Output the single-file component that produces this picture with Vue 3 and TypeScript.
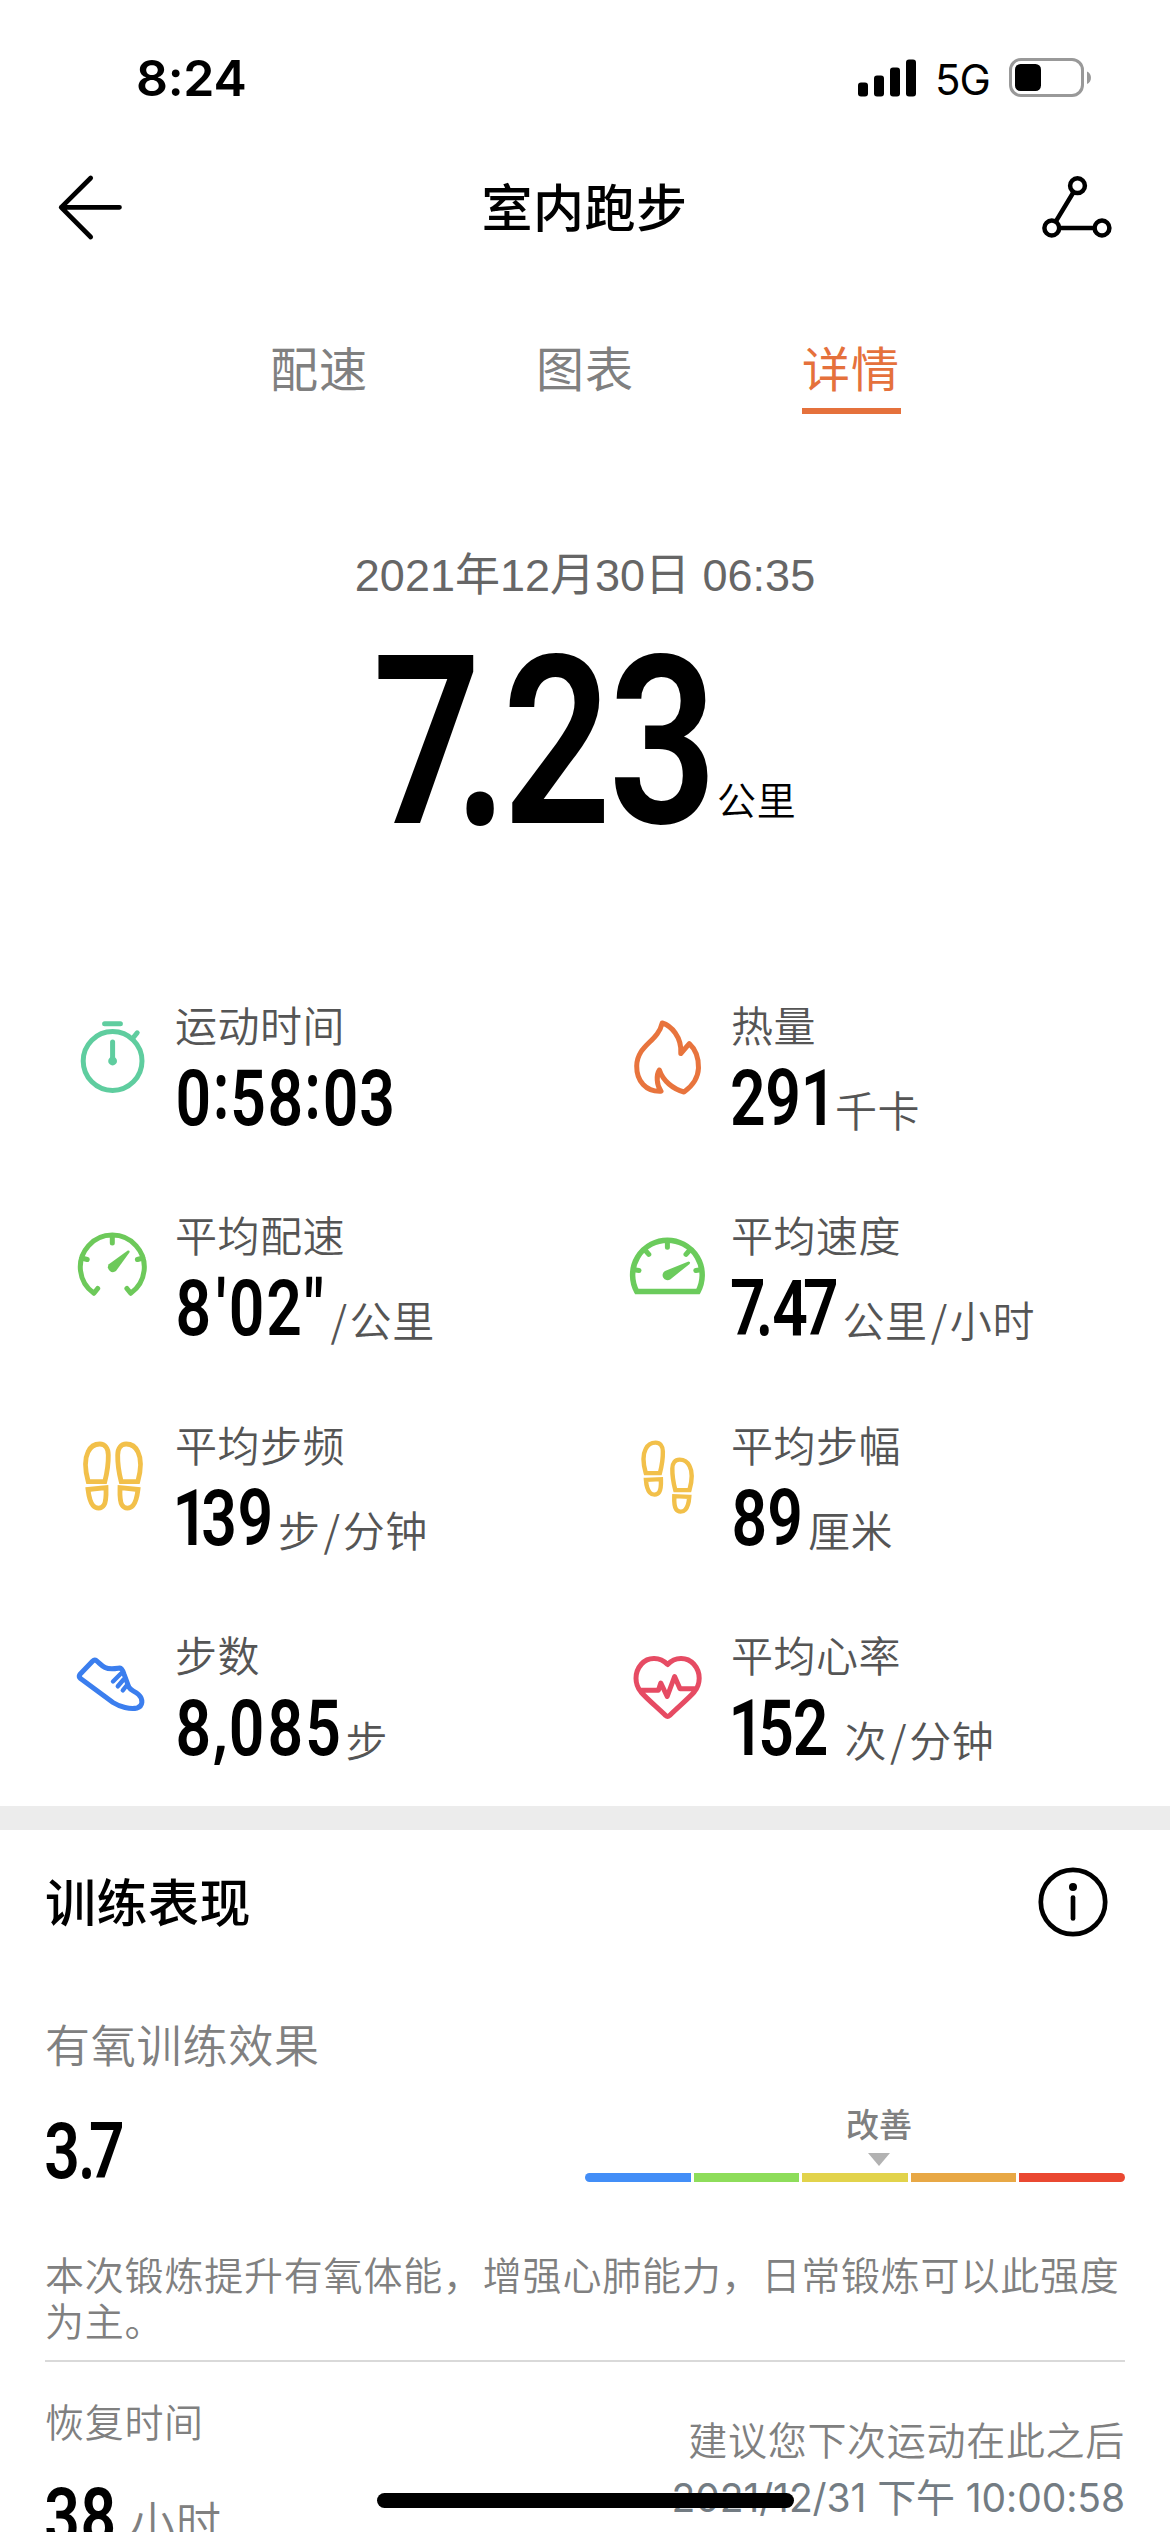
<script setup lang="ts">
import { defineComponent, h } from 'vue'

interface Glyph {
  ch: string
  x: number
}

interface Metric {
  icon: string
  color: string
  label: string
  glyphs: Glyph[]
  width: number
  unit: string[]
}

const glyphs = (text: string, centers: number[]): Glyph[] =>
  text.split('').map((ch, i) => ({ ch, x: centers[i] }))

// Condensed numerals: each glyph is centred on its own x, the baseline is the bottom edge.
const Numeral = defineComponent({
  props: {
    items: { type: Array as () => Glyph[], required: true },
    width: { type: Number, required: true },
    size: { type: Number, required: true },
  },
  setup(props) {
    const squeeze = 0.81
    return () => {
      const height = Math.round(props.size * 0.8)
      return h(
        'svg',
        {
          width: props.width,
          height,
          viewBox: `0 0 ${props.width} ${height}`,
          style: { display: 'block', overflow: 'visible', flex: 'none' },
        },
        h(
          'text',
          {
            transform: `scale(${squeeze} 1)`,
            'text-anchor': 'middle',
            'font-family': 'Roboto, sans-serif',
            'font-weight': 600,
            'font-size': props.size,
            fill: '#000',
          },
          props.items.map((g) =>
            h(
              'tspan',
              {
                x: (g.x + (g.ch === '1' ? props.size * 0.055 : 0)) / squeeze,
                // the colon sits centred between baseline and cap height
                y: height - (g.ch === ':' ? props.size * 0.085 : 0),
                // Roboto's own dots are square
                'font-family': /[.,:]/.test(g.ch) ? '"Open Sans", sans-serif' : undefined,
              },
              g.ch,
            ),
          ),
        ),
      )
    }
  },
})

const tabs = ['配速', '图表', '详情']
const activeTab = '详情'

const distance = glyphs('7.23', [46.8, 100, 177, 283])
const effect = glyphs('3.7', [17, 41.6, 61.9])
const recovery = glyphs('38', [17, 53.2])

const metrics: Metric[] = [
  { icon: 'timer', color: '#5fcd9f', label: '运动时间', glyphs: glyphs('0:58:03', [18.3, 46.1, 73, 110.4, 137.5, 165.7, 202.2]), width: 222, unit: [] },
  { icon: 'flame', color: '#e8743d', label: '热量', glyphs: glyphs('291', [16.7, 52.1, 83.4]), width: 104, unit: ['千卡'] },
  { icon: 'pace', color: '#6dc95a', label: '平均配速', glyphs: glyphs('8\'02"', [18.3, 46.1, 71.5, 109, 138.9]), width: 152.5, unit: ['/', '公里'] },
  { icon: 'speed', color: '#6bcb5c', label: '平均速度', glyphs: glyphs('7.47', [16.7, 33.4, 59, 89.7]), width: 111.5, unit: ['公里', '/', '小时'] },
  { icon: 'cadence', color: '#f2c04a', label: '平均步频', glyphs: glyphs('139', [11, 44, 80.2]), width: 103, unit: ['步', '/', '分钟'] },
  { icon: 'stride', color: '#f2c04a', label: '平均步幅', glyphs: glyphs('89', [18.4, 54.2]), width: 77, unit: ['厘米'] },
  { icon: 'shoe', color: '#3b7eee', label: '步数', glyphs: glyphs('8,085', [18.3, 45.4, 71.5, 110.4, 148]), width: 170.5, unit: ['步'] },
  { icon: 'heart', color: '#e64b63', label: '平均心率', glyphs: glyphs('152', [11, 45.2, 79.6]), width: 113.5, unit: ['次', '/', '分钟'] },
]

const zones = ['#438ef7', '#8edd5a', '#e2d34b', '#e8a845', '#ea4831']
</script>

<template>
  <div class="page">
    <div class="status">
      <span class="clock">8:24</span>
      <svg class="signal" width="58" height="38" viewBox="0 0 58 38">
        <rect x="0" y="23.5" width="10" height="14" rx="3" />
        <rect x="16" y="16.5" width="10" height="21" rx="3" />
        <rect x="32" y="8.5" width="10" height="29" rx="3" />
        <rect x="48" y="0.5" width="10" height="37" rx="3" />
      </svg>
      <span class="net">5G</span>
      <svg class="battery" width="84" height="40" viewBox="0 0 84 40">
        <rect x="1.5" y="1.5" width="72" height="36" rx="10.5" fill="none" stroke="#999" stroke-width="3" />
        <rect x="6" y="6" width="26" height="27" rx="5.5" />
        <path d="M78 13.5C83.3 15.5 83.3 24 78 26Z" fill="#999" />
      </svg>
    </div>

    <header class="nav">
      <svg width="80" height="80" viewBox="50 167 80 80" fill="none" stroke="#000" stroke-width="4.7" stroke-linecap="round" stroke-linejoin="round">
        <path d="M119.5 207.3H61.2M90.7 178L61.2 207.3L90.7 237" />
      </svg>
      <h1>室内跑步</h1>
      <svg width="80" height="80" viewBox="1037 167 80 80" fill="none" stroke="#000" stroke-width="4.5">
        <circle cx="1077.5" cy="185.7" r="7.4" />
        <circle cx="1051.8" cy="228" r="7.4" />
        <circle cx="1102" cy="228" r="7.4" />
        <path d="M1073.6 192L1055.7 221.7M1059.2 228H1094.6" />
      </svg>
    </header>

    <nav class="tabs">
      <span v-for="tab in tabs" :key="tab" :class="['tab', { active: tab === activeTab }]">{{ tab }}</span>
    </nav>

    <section class="summary">
      <p class="date">2021年12月30日 06:35</p>
      <div class="distance">
        <Numeral :items="distance" :width="337" :size="235" />
        <span>公里</span>
      </div>
    </section>

    <section class="metrics">
      <div v-for="m in metrics" :key="m.label" class="metric">
        <svg class="icon" width="84" height="84" viewBox="0 0 84 84" fill="none" :stroke="m.color" stroke-width="5" stroke-linecap="round" stroke-linejoin="round">
          <template v-if="m.icon === 'timer'">
            <circle cx="42.6" cy="46" r="29.4" />
            <path d="M34.6 8.8H50.4M63.8 22L67.2 17.8M42.6 27V46" />
            <circle cx="42.6" cy="46" r="4.4" :fill="m.color" stroke="none" />
          </template>
          <path v-else-if="m.icon === 'flame'" d="M36.2 8C45 10.5 56 22 54.8 38.5L63.3 28.7C68 33 72.7 41 72.5 53C72 65 65 72 58 77C47 74 37 66 33.4 55C30 60 30.5 70 35 76.3C20 77 10.5 66 10.7 51C11 30 32 27 36.2 8Z" />
          <template v-else-if="m.icon === 'pace'">
            <path d="M27.7 63.5L23.9 68.3A32 32 0 1 1 60.7 68.3L56.9 63.5M42.3 11V18M11.5 33L17.2 34.5M73.1 33L67.4 34.5" />
            <path d="M38.8 39.3L57.8 25.6Q60.3 25.2 59.4 27.6L46 46A5 5 0 0 1 38.8 39.3Z" :fill="m.color" stroke="none" />
          </template>
          <template v-else-if="m.icon === 'speed'">
            <path d="M10.8 66.6A34.8 34.8 0 1 1 72 66.6Z" stroke-width="5.5" stroke-linejoin="miter" />
            <path d="M41.4 16V22.3M8 44.8L13 45.4M74.8 44.8L69.8 45.4M19 25L22.8 29.4M63.8 25L60 29.4" />
            <path d="M39 45.9L62.5 36.5Q65 36.8 63.6 38.9L44.2 54.5A5 5 0 0 1 39 45.9Z" :fill="m.color" stroke="none" />
          </template>
          <template v-else-if="m.icon === 'cadence'">
            <g v-for="side in ['', 'translate(86 0) scale(-1 1)']" :key="side" :transform="side" stroke-width="4.8" stroke-linejoin="miter">
              <path d="M18.2 46.6C15 35 14.5 24 18 17C20.5 11.5 25 9 29.8 9C35 9 38.3 13 38.3 20C38.5 30 37 38 34.8 46.6Z" />
              <path d="M18 54.5L36 52.7C36.2 60 36.5 66 34 70C31.5 74 26 74 23 70.5C20 67 18.8 61 18 54.5Z" />
            </g>
          </template>
          <template v-else-if="m.icon === 'stride'">
            <g v-for="side in ['translate(4.3 .4) scale(.85 .81)', 'translate(78.9 17.4) scale(-.85 .81)']" :key="side" :transform="side" stroke-width="5.2" stroke-linejoin="miter">
              <path d="M18.2 46.6C15 35 14.5 24 18 17C20.5 11.5 25 9 29.8 9C35 9 38.3 13 38.3 20C38.5 30 37 38 34.8 46.6Z" />
              <path d="M18.4 54.8L36 54C36.2 60 36.5 66 34 70C31.5 74 26 74 23 70.5C20 67 18.8 61 18.4 54.8Z" />
            </g>
          </template>
          <template v-else-if="m.icon === 'shoe'">
            <path d="M26.5 15.8Q24.5 14.2 22.5 16.2L9.8 29.5Q8.5 31.5 10.5 33.5L43 57.5C50 62 60 64.5 67 63C73 61.5 73.5 54 68.5 49.5C64 45.5 61 46 58.8 42L54 29Q52 23 50 23C46 23.5 40 25 35 22.5C31 20.5 29.5 18 26.5 15.8Z" />
            <path d="M43 36.5L51 28.5M47.8 41.3L53.6 34.5M52.8 45.3L57 40" stroke-width="4.4" />
          </template>
          <path v-else d="M41.6 19.5C34 11.5 22 11.5 15.5 19C8 27.5 8.5 39 15 47C21 54 32 63 39.5 70.4Q41.6 72.3 43.7 70.4C51 63 62 54 68.2 47C74.7 39 75.2 27.5 67.7 19C61 11.5 49 11.5 41.6 19.5ZM15 45.3H32.4L34.8 38L41.2 51.5L48.6 31.5L54 43.7H68.5" />
        </svg>
        <div class="body">
          <span class="label">{{ m.label }}</span>
          <div class="value">
            <Numeral :items="m.glyphs" :width="m.width" :size="77" />
            <span class="unit"><span v-for="part in m.unit" :key="part" :class="{ slash: part === '/' }">{{ part }}</span></span>
          </div>
        </div>
      </div>
    </section>

    <section class="training">
      <div class="heading">
        <h2>训练表现</h2>
        <svg width="76" height="76" viewBox="0 0 76 76" fill="none" stroke="#000" stroke-width="4.7" stroke-linecap="round">
          <circle cx="38" cy="38" r="32.2" />
          <path d="M38 33.5V54.5" />
          <circle cx="38" cy="23" r="4" fill="#000" stroke="none" />
        </svg>
      </div>
      <p class="sub">有氧训练效果</p>
      <div class="effect">
        <Numeral :items="effect" :width="90" :size="77" />
        <div class="scale">
          <div class="marker">
            <span>改善</span>
            <svg width="22" height="13" viewBox="0 0 22 13"><path d="M0 0H22L11 13Z" fill="#b2b2b2" /></svg>
          </div>
          <div class="zones">
            <i v-for="z in zones" :key="z" :style="{ background: z }"></i>
          </div>
        </div>
      </div>
      <p class="advice">本次锻炼提升有氧体能，增强心肺能力，日常锻炼可以此强度<br />为主。</p>
      <div class="recovery">
        <div class="left">
          <span class="caption">恢复时间</span>
          <div class="hours">
            <Numeral :items="recovery" :width="85" :size="77" />
            <span>小时</span>
          </div>
        </div>
        <div class="right">
          <span class="caption">建议您下次运动在此之后</span>
          <span class="when">2021/12/31 下午 10:00:58</span>
        </div>
      </div>
    </section>

    <div class="home"></div>
  </div>
</template>

<style>
body {
  margin: 0;
  background: #fff;
}
</style>

<style scoped>
.page {
  position: relative;
  display: flex;
  flex-direction: column;
  width: 1170px;
  height: 2532px;
  overflow: hidden;
  background: #fff;
  color: #000;
  font-family: 'Noto Sans CJK SC', sans-serif;
}

.page * {
  box-sizing: border-box;
}

h1,
h2,
p {
  margin: 0;
  font-weight: 500;
}

svg {
  display: block;
  flex: none;
}

.status {
  display: flex;
  align-items: center;
  flex: none;
  height: 156px;
  padding: 0 77px 0 136px;
  font-family: Inter, sans-serif;
}

.clock {
  flex: 1;
  font-size: 50px;
  font-weight: 600;
  letter-spacing: -0.3px;
}

.net {
  width: 74px;
  margin-left: 19px;
  padding-top: 2px;
  font-size: 42px;
  letter-spacing: -1px;
}

.nav {
  display: flex;
  align-items: center;
  justify-content: space-between;
  flex: none;
  height: 102px;
  padding: 0 53px 0 50px;
}

.nav h1,
.heading h2 {
  font-size: 51px;
  line-height: 70px;
  letter-spacing: 0.5px;
}

.nav h1 {
  position: relative;
  top: -2px;
  padding-left: 2px;
}

.tabs {
  display: flex;
  justify-content: center;
  gap: 167px;
  flex: none;
  height: 216px;
  padding-top: 74px;
}

.tab {
  width: 99px;
  height: 82px;
  color: #808080;
  font-size: 48px;
  line-height: 68px;
  letter-spacing: 1px;
  text-align: center;
  white-space: nowrap;
}

.tab.active {
  color: #e5713c;
  border-bottom: 6px solid #e5713c;
}

.summary {
  flex: none;
  height: 526px;
  padding-top: 70px;
}

.date {
  height: 64px;
  color: #666;
  font: 45px/64px 'Liberation Sans', 'Noto Sans CJK SC', sans-serif;
  text-align: center;
}

.distance {
  display: flex;
  align-items: flex-end;
  height: 215px;
  padding-left: 380px;
}

.distance span {
  height: 53px;
  font-size: 39px;
  font-weight: 350;
  line-height: 57px;
  letter-spacing: 0.8px;
}

.metrics {
  display: grid;
  grid-template-columns: 556px 1fr;
  grid-auto-rows: 210px;
  flex: none;
  height: 806px;
  padding-left: 70px;
}

.metric {
  display: flex;
  gap: 21px;
  color: #555;
}

.icon {
  margin-top: 15px;
}

.label {
  display: block;
  height: 62px;
  margin-top: -7px;
  font-size: 42px;
  font-weight: 350;
  line-height: 62px;
  letter-spacing: 0.5px;
}

.value {
  display: flex;
  align-items: flex-end;
  height: 70px;
}

.unit {
  height: 41px;
  font-size: 42px;
  font-weight: 350;
  line-height: 50px;
  letter-spacing: 0.6px;
  white-space: nowrap;
}

.slash {
  padding: 0 2px 0 3px;
}

.training {
  flex: none;
  border-top: 24px solid #ececec;
  padding: 0 45px;
  color: #808080;
}

.heading {
  display: flex;
  align-items: center;
  justify-content: space-between;
  height: 143px;
  padding-right: 14.5px;
  color: #000;
}

.heading h2 {
  position: relative;
  top: -2px;
}

.sub {
  height: 65px;
  margin-top: 38px;
  font-size: 45px;
  font-weight: 350;
  line-height: 66px;
  letter-spacing: 0.8px;
}

.effect {
  display: flex;
  align-items: flex-end;
  justify-content: space-between;
  height: 106px;
  padding-bottom: 0;
}

.effect > svg {
  margin-bottom: 4px;
}

.scale {
  width: 540px;
}

.marker {
  display: flex;
  flex-direction: column;
  align-items: center;
  width: 588px;
  font-size: 33px;
  font-weight: 500;
  line-height: 48px;
}

.marker svg {
  margin: 6px 0 7px;
}

.zones {
  display: flex;
  gap: 3px;
  height: 9px;
  border-radius: 5px;
  overflow: hidden;
}

.zones i {
  flex: 1;
}

.advice {
  height: 180px;
  padding-top: 68px;
  border-bottom: 2px solid #d9d9d9;
  font-size: 39px;
  font-weight: 350;
  line-height: 46px;
  letter-spacing: 0.8px;
  white-space: nowrap;
}

.recovery {
  display: flex;
  justify-content: space-between;
  font-weight: 350;
}

.caption {
  display: block;
  height: 58px;
  font-size: 39px;
  line-height: 58px;
  letter-spacing: 0.7px;
}

.left {
  padding-top: 29px;
}

.hours {
  display: flex;
  align-items: flex-end;
  height: 94px;
}

.hours span {
  height: 52px;
  font-size: 45px;
  line-height: 60px;
  letter-spacing: 0.9px;
}

.right {
  padding-top: 47px;
  text-align: right;
}

.when {
  display: block;
  color: #737c83;
  font: 400 39px/62px Inter, 'Noto Sans CJK SC', sans-serif;
  letter-spacing: -0.1px;
  white-space: nowrap;
}

.home {
  position: absolute;
  left: 377px;
  top: 2493px;
  width: 417px;
  height: 15px;
  border-radius: 8px;
  background: #000;
}
</style>
